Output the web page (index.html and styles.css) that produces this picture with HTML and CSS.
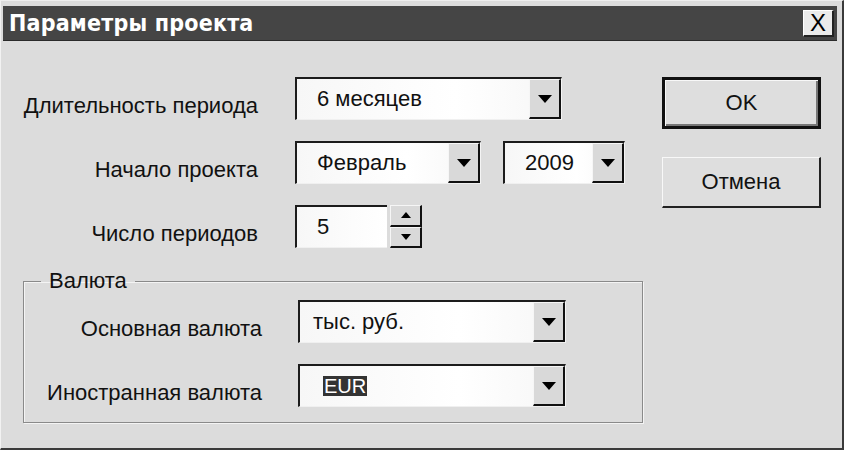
FILE: index.html
```html
<!DOCTYPE html>
<html lang="ru">
<head>
<meta charset="utf-8">
<title>Параметры проекта</title>
<link rel="stylesheet" href="styles.css">
</head>
<body>
<div class="dialog">
  <div class="titlebar">
    <span class="title">Параметры проекта</span>
    <span class="close">X</span>
  </div>
  <div class="content">
    <div class="form">
      <div class="row">
        <span class="label">Длительность периода</span>
        <div class="combo w-long"><span class="value">6 месяцев</span><span class="drop"><i class="arrow"></i></span></div>
      </div>
      <div class="row">
        <span class="label">Начало проекта</span>
        <div class="combo w-month"><span class="value">Февраль</span><span class="drop"><i class="arrow"></i></span></div>
        <div class="combo w-year"><span class="value">2009</span><span class="drop"><i class="arrow"></i></span></div>
      </div>
      <div class="row">
        <span class="label">Число периодов</span>
        <div class="spin">
          <div class="spin-field"><span class="value">5</span></div>
          <div class="spin-btns">
            <span class="spin-btn"><i class="arrow up"></i></span>
            <span class="spin-btn"><i class="arrow small"></i></span>
          </div>
        </div>
      </div>
      <fieldset class="group">
        <legend>Валюта</legend>
        <div class="row">
          <span class="label g">Основная валюта</span>
          <div class="combo w-cur"><span class="value v2">тыс. руб.</span><span class="drop"><i class="arrow"></i></span></div>
        </div>
        <div class="row">
          <span class="label g">Иностранная валюта</span>
          <div class="combo w-cur"><span class="value v2"><span class="sel">EUR</span></span><span class="drop"><i class="arrow"></i></span></div>
        </div>
      </fieldset>
    </div>
    <div class="buttons">
      <span class="btn default">OK</span>
      <span class="btn">Отмена</span>
    </div>
  </div>
</div>
</body>
</html>
```
FILE: styles.css
```css
* { box-sizing: border-box; }
html, body { margin: 0; padding: 0; }
body {
  width: 844px;
  height: 450px;
  overflow: hidden;
  background: #dcdcdc;
  font-family: "Liberation Sans", Arial, sans-serif;
  color: #111;
}
.dialog {
  width: 844px;
  height: 450px;
  background: #dcdcdc;
  border-left: 1px solid #f2f2f2;
  border-top: 1px solid #eeeeee;
  border-right: 2px solid #3a3a3a;
  border-bottom: 2px solid #3a3a3a;
  padding: 5px 5px 0 2px;
}
.titlebar {
  height: 35px;
  background: #454545;
  border-bottom: 1px solid #2a2a2a;
  display: flex;
  align-items: center;
  justify-content: space-between;
  padding: 0 3px 0 6px;
}
.title {
  color: #fff;
  font-family: "DejaVu Sans Condensed", "DejaVu Sans", sans-serif;
  font-stretch: condensed;
  font-weight: bold;
  font-size: 23px;
  letter-spacing: 0.2px;
}
.close {
  width: 31px;
  height: 27px;
  background: #ebebeb;
  border-top: 1px solid #fff;
  border-left: 1px solid #fff;
  border-right: 2px solid #222;
  border-bottom: 2px solid #222;
  display: flex;
  align-items: center;
  justify-content: center;
  font-size: 24px;
  color: #000;
  font-family: "Liberation Sans", sans-serif;
}
.content {
  display: flex;
  padding-top: 36px;
}
.form {
  margin-left: 20px;
  width: 620px;
}
.row {
  display: flex;
  align-items: center;
  height: 43px;
  margin-bottom: 21px;
}
.label {
  width: 235px;
  margin-right: 37px;
  padding-top: 14px;
  text-align: right;
  font-size: 22px;
  white-space: nowrap;
}
.label.g {
  width: 238px;
  margin-right: 36px;
}
.combo {
  height: 43px;
  display: flex;
  background: linear-gradient(to right, #f7f7f7, #ffffff 60%, #f6f6f6);
  border-top: 2px solid #1c1c1c;
  border-left: 2px solid #1c1c1c;
  border-right: 1px solid #f4f4f4;
  border-bottom: 1px solid #f0f0f0;
}
.w-long { width: 267px; }
.w-month { width: 186px; }
.w-year { width: 122px; margin-left: 22px; }
.w-cur { width: 268px; }
.value {
  flex: 1;
  display: flex;
  align-items: center;
  padding-left: 20px;
  font-size: 22px;
}
.value.v2 { padding-left: 13px; }
.w-cur .sel { margin-left: 10px; }
.sel {
  background: #333;
  color: #fff;
  padding: 0 1px;
  line-height: 20px;
  font-size: 20px;
}
.drop {
  width: 32px;
  display: flex;
  align-items: center;
  justify-content: center;
  background: #d9d9d9;
  border-top: 1px solid #f6f6f6;
  border-left: 1px solid #f6f6f6;
  border-right: 2px solid #111;
  border-bottom: 2px solid #111;
}
.arrow {
  width: 0;
  height: 0;
  border-left: 7px solid transparent;
  border-right: 7px solid transparent;
  border-top: 8px solid #000;
}
.arrow.small {
  border-left-width: 5px;
  border-right-width: 5px;
  border-top-width: 6px;
}
.arrow.up {
  border-top: 0;
  border-left-width: 5px;
  border-right-width: 5px;
  border-bottom: 6px solid #000;
}
.spin {
  display: flex;
  height: 43px;
}
.spin-field {
  width: 92px;
  display: flex;
  background: linear-gradient(to right, #f7f7f7, #ffffff);
  border-top: 2px solid #1c1c1c;
  border-left: 2px solid #1c1c1c;
  border-bottom: 1px solid #f0f0f0;
}
.spin-btns {
  margin-left: 3px;
  width: 32px;
  display: flex;
  flex-direction: column;
}
.spin-btn {
  flex: 1;
  display: flex;
  align-items: center;
  justify-content: center;
  background: #d9d9d9;
  border-top: 1px solid #f6f6f6;
  border-left: 1px solid #f6f6f6;
  border-right: 2px solid #111;
  border-bottom: 2px solid #111;
}
.group {
  margin: 22px 0 0 0;
  width: 620px;
  border: 1px solid #8a8a8a;
  box-shadow: inset 1px 1px 0 #f4f4f4, 1px 1px 0 #f4f4f4;
  padding: 8px 0 0 0;
}
.group legend {
  margin-left: 17px;
  padding: 0 8px;
  font-size: 22px;
  line-height: 22px;
}
.group .row:last-child { margin-bottom: 15px; }
.buttons {
  margin-left: 19px;
  display: flex;
  flex-direction: column;
}
.btn {
  width: 159px;
  height: 51px;
  display: flex;
  align-items: center;
  justify-content: center;
  font-size: 22px;
  background: #dedede;
  border-top: 1px solid #f8f8f8;
  border-left: 1px solid #f8f8f8;
  border-right: 2px solid #222;
  border-bottom: 2px solid #222;
}
.btn.default {
  height: 52px;
  border: 3px solid #111;
  box-shadow: inset 1px 1px 0 #f8f8f8, inset -2px -2px 0 #777;
  margin-bottom: 28px;
}
```
